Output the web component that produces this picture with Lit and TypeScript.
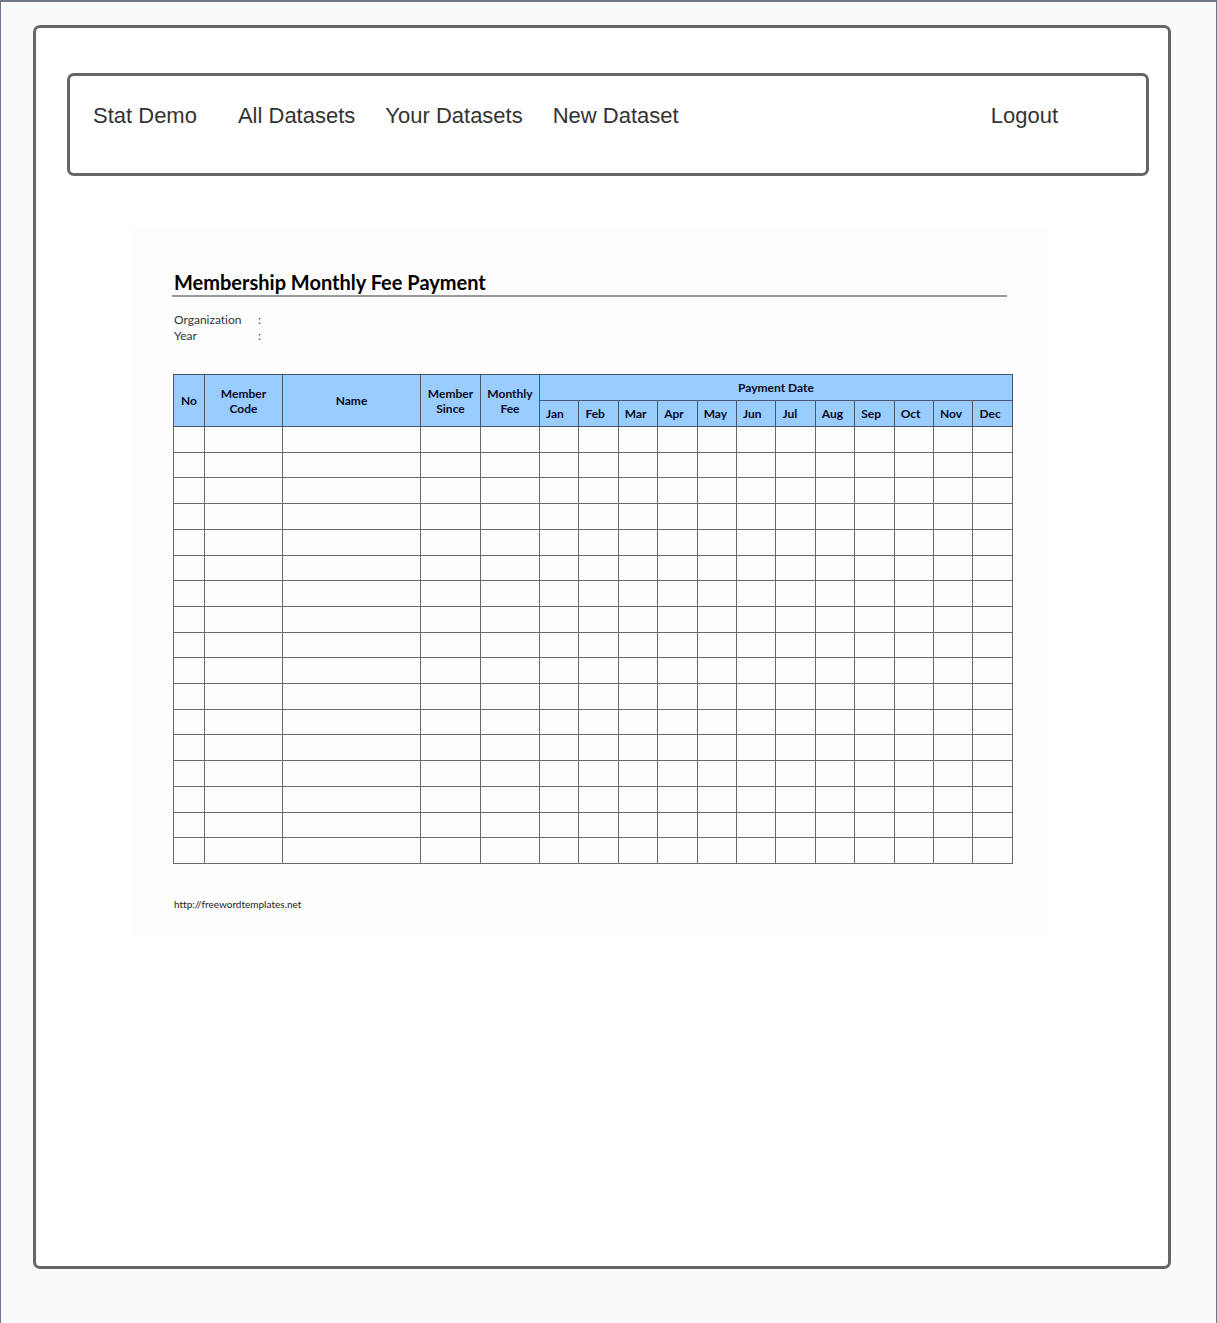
import { LitElement, html, css } from "lit";
import { customElement } from "lit/decorators.js";

const MONTHS = ["Jan", "Feb", "Mar", "Apr", "May", "Jun", "Jul", "Aug", "Sep", "Oct", "Nov", "Dec"];
const LINES = Array.from({ length: 17 });

@customElement("site-nav")
export class SiteNav extends LitElement {
  static styles = css`
    :host {
      display: block;
    }
    .bar {
      box-sizing: border-box;
      display: flex;
      align-items: flex-start;
      min-height: 103px;
      padding: 27px 88px 26px 23px;
      border: 3px solid #666;
      border-radius: 7px;
      background: #fff;
    }
    .links {
      display: flex;
      flex: 1;
      gap: 30px;
      margin-left: 41px;
    }
    .link {
      color: #333;
      font: 22px/26px "Liberation Sans", Arial, sans-serif;
      text-decoration: none;
      white-space: nowrap;
    }
  `;

  render() {
    return html`
      <nav class="bar">
        <a class="link" href="#home">Stat Demo</a>
        <div class="links">
          <a class="link" href="#all">All Datasets</a>
          <a class="link" href="#yours">Your Datasets</a>
          <a class="link" href="#new">New Dataset</a>
        </div>
        <a class="link" href="#logout">Logout</a>
      </nav>
    `;
  }
}

@customElement("fee-sheet")
export class FeeSheet extends LitElement {
  static styles = css`
    :host {
      display: block;
    }
    .sheet {
      padding: 42px 34px 25px 40px;
      background: #fdfdfd;
      color: #111;
      font: 12px/16px Lato, Carlito, Calibri, sans-serif;
      font-variant-ligatures: none;
    }
    .title {
      margin: 0 6px 0 0;
      padding: 0 2px 1px;
      border-bottom: 2px solid #999;
      color: #000;
      font-size: 20px;
      font-weight: 700;
      line-height: 24px;
    }
    .facts {
      display: grid;
      grid-template-columns: 84px 1fr;
      margin: 15px 2px 30px;
      color: #333;
    }
    .value {
      margin: 0;
    }
    .grid {
      width: calc(100% - 1px);
      height: 490px;
      margin-left: 1px;
      border-collapse: collapse;
      table-layout: fixed;
    }
    .no {
      width: 31px;
    }
    .code {
      width: 78px;
    }
    .name {
      width: 138px;
    }
    .since {
      width: 60px;
    }
    .fee {
      width: 59px;
    }
    .headrow {
      height: 26px;
    }
    .head,
    .cell {
      padding: 0;
      border: 1px solid #6b6b6b;
    }
    .head {
      border-color: #4a5668;
      background: #99ccff;
      color: #0a0a1e;
      font-weight: 700;
      line-height: 15px;
    }
    .month {
      padding-left: 6px;
      text-align: left;
    }
    .source {
      display: inline-block;
      margin: 32px 2px 0;
      color: #222;
      font-size: 10px;
      text-decoration: none;
    }
  `;

  render() {
    return html`
      <article class="sheet">
        <h1 class="title">Membership Monthly Fee Payment</h1>
        <dl class="facts">
          <dt>Organization</dt>
          <dd class="value">:</dd>
          <dt>Year</dt>
          <dd class="value">:</dd>
        </dl>
        <table class="grid">
          <colgroup>
            <col class="no" />
            <col class="code" />
            <col class="name" />
            <col class="since" />
            <col class="fee" />
            <col span="12" />
          </colgroup>
          <thead>
            <tr class="headrow">
              <th class="head" rowspan="2" scope="col">No</th>
              <th class="head" rowspan="2" scope="col">Member<br />Code</th>
              <th class="head" rowspan="2" scope="col">Name</th>
              <th class="head" rowspan="2" scope="col">Member<br />Since</th>
              <th class="head" rowspan="2" scope="col">Monthly<br />Fee</th>
              <th class="head" colspan="12" scope="colgroup">Payment Date</th>
            </tr>
            <tr class="headrow">
              ${MONTHS.map((m) => html`<th class="head month" scope="col">${m}</th>`)}
            </tr>
          </thead>
          <tbody>
            ${LINES.map(
              () => html`<tr>
                ${Array.from({ length: 17 }, () => html`<td class="cell"></td>`)}
              </tr>`
            )}
          </tbody>
        </table>
        <a class="source" href="http://freewordtemplates.net">http://freewordtemplates.net</a>
      </article>
    `;
  }
}

@customElement("app-root")
export class AppRoot extends LitElement {
  static styles = css`
    :host {
      display: block;
    }
    .page {
      box-sizing: border-box;
      display: flex;
      min-height: 100vh;
      padding: 23px 45px 54px 32px;
      border: 1px solid #70758a;
      border-width: 2px 1px 0;
      background: #fafafa;
    }
    .frame {
      flex: 1;
      min-width: 0;
      padding: 45px 19px 45px 31px;
      border: 3px solid #666;
      border-radius: 7px;
      background: #fff;
    }
    .sheet {
      margin: 52px 102px 0 65px;
    }
  `;

  render() {
    return html`
      <div class="page">
        <main class="frame">
          <site-nav></site-nav>
          <fee-sheet class="sheet"></fee-sheet>
        </main>
      </div>
    `;
  }
}
